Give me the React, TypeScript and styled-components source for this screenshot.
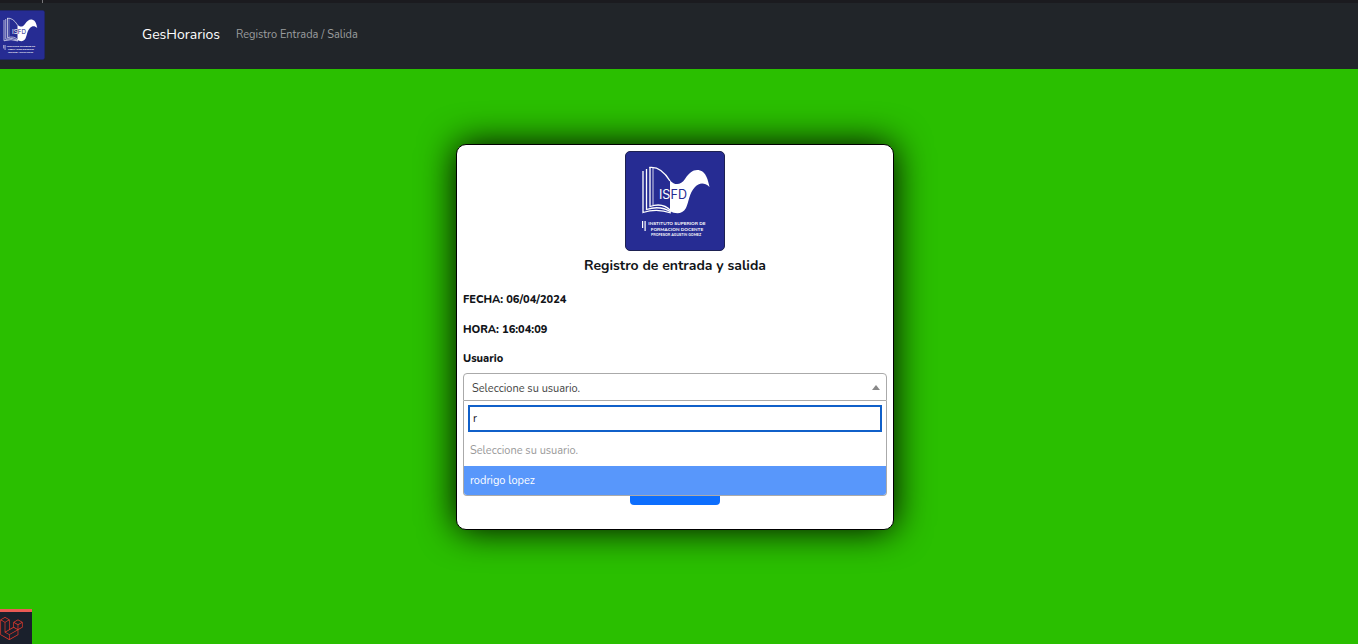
import React, { useState } from 'react';
import styled, { createGlobalStyle } from 'styled-components';
import { SiLaravel } from 'react-icons/si';

const GlobalStyle = createGlobalStyle`
  *, *::before, *::after { box-sizing: border-box; }
  body {
    margin: 0;
    background: #2abf00;
    color: #111418;
    font-family: Nunito, "Noto Sans", sans-serif;
    font-size: 11px;
    line-height: 18px;
  }
  button, input { font: inherit; color: inherit; }
`;

const TopStrip = styled.div`
  height: 3px;
  padding-left: 42px;
  background: #1b1b1f;
  &::before {
    content: '';
    display: block;
    width: 1px;
    height: 3px;
    background: #77777a;
  }
`;

const Navbar = styled.nav`
  display: flex;
  align-items: center;
  min-height: 66px;
  padding: 6px 0 8px;
  background: #212529;
`;

const LogoLink = styled.a`
  display: block;
  margin: 0 97px 0 -5px;
`;

const LogoSvg = styled.svg<{ $size: number }>`
  display: block;
  width: ${({ $size }) => $size}px;
  height: ${({ $size }) => $size}px;
`;

const Brand = styled.a`
  margin-right: 16px;
  color: #fff;
  font-size: 14px;
  text-decoration: none;
`;

const NavLink = styled.a`
  color: #9b9d9f;
  text-decoration: none;
`;

const Page = styled.main`
  display: flex;
  justify-content: center;
  padding: 75px 8px 75px 0;
`;

const Card = styled.form`
  display: flex;
  flex-direction: column;
  width: 100%;
  max-width: 438px;
  padding: 6px 6px 24px;
  background: #fff;
  border: 1px solid #000;
  border-radius: 10px;
  box-shadow: 0 0 36px #000;
`;

const CardLogo = styled.div`
  align-self: center;
`;

const Title = styled.h1`
  margin: 6px 0 16px;
  font-size: 14px;
  font-weight: 700;
  line-height: 18px;
  text-align: center;
`;

const Info = styled.p`
  margin: 0 0 12px;
  font-weight: 800;
`;

const FieldLabel = styled.label`
  margin-bottom: 6px;
  font-weight: 800;
  line-height: 16px;
`;

const SelectBox = styled.div`
  position: relative;
`;

const SelectToggle = styled.button<{ $open: boolean }>`
  display: flex;
  align-items: center;
  justify-content: space-between;
  width: 100%;
  height: 28px;
  padding: 4px 6px 0 8px;
  color: #444;
  background: #fff;
  border: 1px solid #aaa;
  border-radius: ${({ $open }) => ($open ? '4px 4px 0 0' : '4px')};
`;

const Arrow = styled.span<{ $open: boolean }>`
  margin-bottom: 4px;
  border: 4px solid transparent;
  border-top-width: ${({ $open }) => ($open ? 0 : 5)}px;
  border-bottom-width: ${({ $open }) => ($open ? 5 : 0)}px;
  border-top-color: #888;
  border-bottom-color: #888;
`;

const Dropdown = styled.div`
  position: absolute;
  top: 100%;
  left: 0;
  right: 0;
  overflow: hidden;
  background: #fff;
  border: 1px solid #aaa;
  border-top: 0;
  border-radius: 0 0 4px 4px;
`;

const SearchInput = styled.input`
  display: block;
  width: calc(100% - 8px);
  height: 27px;
  margin: 4px 4px 3px;
  padding: 0 3px;
  background: #fff;
  border: 2px solid #1060c9;
  border-radius: 0;
  outline: 0;
`;

const Options = styled.ul`
  margin: 0;
  padding: 0;
  list-style: none;
`;

const Option = styled.li<{ $highlighted?: boolean }>`
  display: flex;
  align-items: center;
  height: ${({ $highlighted }) => ($highlighted ? 29 : 31)}px;
  padding: 0 6px;
  color: ${({ $highlighted }) => ($highlighted ? '#fff' : '#999')};
  background: ${({ $highlighted }) => ($highlighted ? '#5897fb' : '#fff')};
`;

const SubmitButton = styled.button`
  align-self: center;
  width: 90px;
  height: 30px;
  margin-top: 74px;
  color: #fff;
  background: #0d6efd;
  border: 0;
  border-radius: 4px;
`;

const DebugBadge = styled.button`
  position: fixed;
  bottom: 0;
  left: 0;
  width: 32px;
  height: 35px;
  padding: 2px 0;
  color: #e0392d;
  background: #1a202c;
  border: 0;
  border-top: 3px solid #eb5a55;
  svg { display: block; }
`;

function InstituteLogo({ size }: { size: number }) {
  return (
    <LogoSvg $size={size} viewBox="0 0 100 100" role="img" aria-label="ISFD">
      <rect x="0.5" y="0.5" width="99" height="99" rx="4.5" fill="#262c93" stroke="#1d2152" />
      <g fill="none" stroke="#fff" strokeWidth="1.3">
        <path d="M18 20V61.500Q32 57 46 62" />
        <path d="M21.500 18V58.500Q35 54 46 61" />
        <path d="M25 16V55.500Q38 51 46 60" />
        <path d="M24.400 16.500Q36 15 45 30" />
        <path d="M28 17V54" strokeWidth="0.800" />
      </g>
      <path
        fill="#fff"
        d="M45 29.500C50 35 56 34 60 28C65 21 69 18 75 19.500C81 21 83 29 84.500 36C79 31 74 32 70 36C64 42 64 51 61 57C57 64 50 63 45 60Z"
      />
      <g fontFamily="Inter, sans-serif" fontSize="12.500">
        <text x="34" y="48" fill="#fff">IS</text>
        <text x="45.500" y="48" fill="#262c93">FD</text>
      </g>
      <path fill="#fff" d="M17 70h1.200v7H17zM19.500 70h1.200v10h-1.200z" />
      <g fill="#fff" fontFamily="Nunito, sans-serif" fontWeight="700" textAnchor="middle">
        <text x="52" y="73.500" fontSize="4.700">INSTITUTO SUPERIOR DE</text>
        <text x="52" y="79.500" fontSize="4.700">FORMACION DOCENTE</text>
        <text x="51" y="85" fontSize="3.600">PROFESOR AGUSTIN GOMEZ</text>
      </g>
    </LogoSvg>
  );
}

export default function App() {
  const [open, setOpen] = useState(true);
  const [query, setQuery] = useState('r');

  return (
    <>
      <GlobalStyle />
      <TopStrip />
      <Navbar>
        <LogoLink href="#inicio">
          <InstituteLogo size={50} />
        </LogoLink>
        <Brand href="#inicio">GesHorarios</Brand>
        <NavLink href="#registro">Registro Entrada / Salida</NavLink>
      </Navbar>
      <Page>
        <Card onSubmit={(e) => e.preventDefault()}>
          <CardLogo>
            <InstituteLogo size={100} />
          </CardLogo>
          <Title>Registro de entrada y salida</Title>
          <Info>FECHA: 06/04/2024</Info>
          <Info>HORA: 16:04:09</Info>
          <FieldLabel htmlFor="usuario">Usuario</FieldLabel>
          <SelectBox>
            <SelectToggle
              id="usuario"
              type="button"
              $open={open}
              aria-haspopup="listbox"
              aria-expanded={open}
              onClick={() => setOpen(!open)}
            >
              Seleccione su usuario.
              <Arrow $open={open} />
            </SelectToggle>
            {open && (
              <Dropdown>
                <SearchInput
                  type="text"
                  aria-label="Buscar usuario"
                  value={query}
                  onChange={(e) => setQuery(e.target.value)}
                />
                <Options role="listbox" aria-label="Usuario">
                  <Option role="option" aria-disabled="true">Seleccione su usuario.</Option>
                  <Option role="option" aria-selected="true" $highlighted>rodrigo lopez</Option>
                </Options>
              </Dropdown>
            )}
          </SelectBox>
          <SubmitButton type="submit" aria-label="Registrar" />
        </Card>
      </Page>
      <DebugBadge type="button" aria-label="Laravel">
        <SiLaravel size={23} />
      </DebugBadge>
    </>
  );
}
